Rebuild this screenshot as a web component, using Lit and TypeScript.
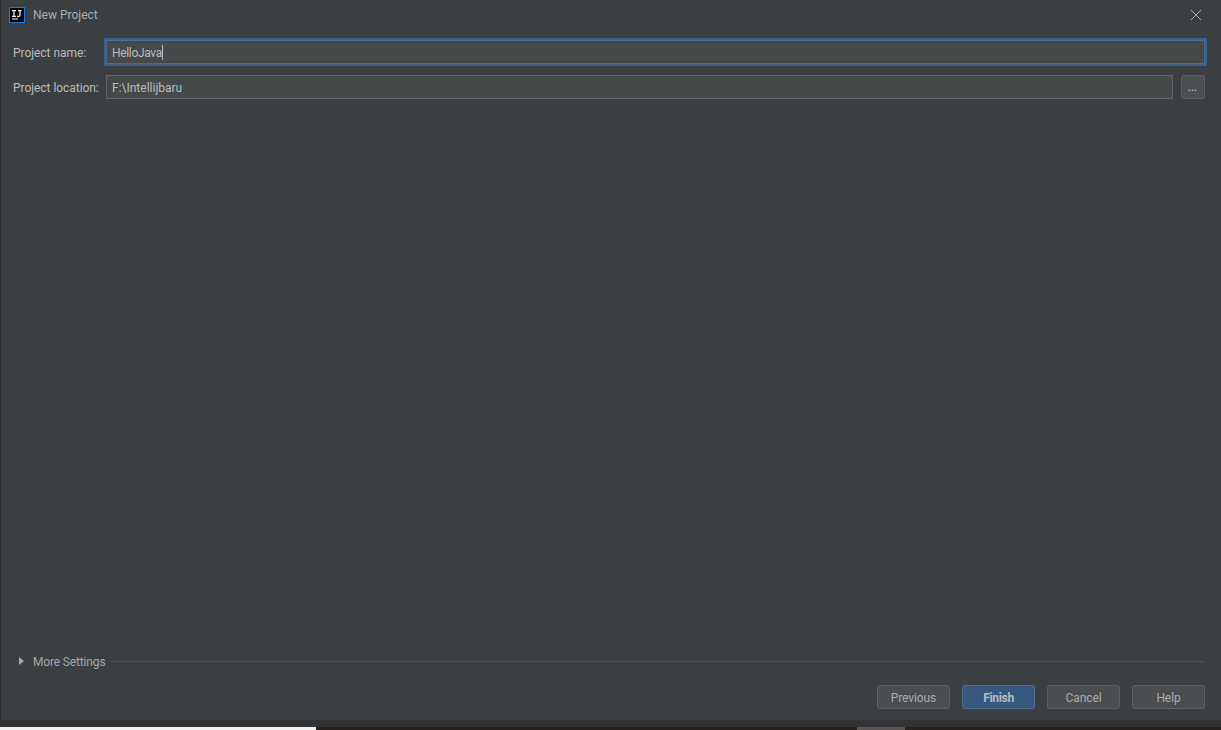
import { LitElement, html, css } from "lit";
import { customElement } from "lit/decorators.js";

@customElement("app-root")
export class AppRoot extends LitElement {
  static styles = css`
    :host {
      display: flex;
      flex-direction: column;
      width: 1221px;
      height: 730px;
      overflow: hidden;
      font-family: Roboto, "Liberation Sans", sans-serif;
      font-size: 12px;
      color: #bbbbbb;
      background: #313335;
    }
    .dialog {
      height: 720px;
      box-sizing: border-box;
      flex: none;
      display: flex;
      flex-direction: column;
      background: #3c3f41;
      border-left: 1px solid #323232;
      padding: 0 16px 11px 12px;
    }
    .title {
      height: 30px;
      flex: none;
      display: flex;
      align-items: center;
      margin-left: -4px;
      gap: 8px;
    }
    .logo {
      width: 16px;
      height: 16px;
      box-sizing: border-box;
      background: #000;
      border: 1px solid #0f7fe8;
      flex: none;
    }
    .logo svg { display: block; }
    .title-text { flex: 1; color: #a9adb0; }
    .close { margin-right: 3px; display: block; }
    .row {
      display: flex;
      align-items: center;
      flex: none;
    }
    .row.name { height: 24px; margin-top: 10px; }
    .row.location { height: 24px; margin-top: 11px; }
    .label { width: 93px; flex: none; padding-top: 2px; letter-spacing: -0.05px; }
    .field {
      box-sizing: border-box;
      height: 24px;
      background: #45494a;
      border: 1px solid #646464;
      padding: 2px 5px 0;
      display: flex;
      align-items: center;
      flex: 1;
      min-width: 0;
    }
    .field.focus {
      border-color: #466d94;
      outline: 2px solid #3d6185;
      letter-spacing: -0.33px;
    }
    .caret {
      width: 1px;
      height: 15px;
      margin-top: -2px;
      background: #bbbbbb;
    }
    .browse {
      box-sizing: border-box;
      width: 24px;
      height: 24px;
      margin-left: 8px;
      flex: none;
      background: #4c5052;
      border: 1px solid #5e6060;
      border-radius: 3px;
      display: flex;
      align-items: flex-end;
      justify-content: center;
      padding: 0 1px 5px 0;
      font-size: 12px;
      line-height: 11px;
      color: #d0d0d0;
    }
    .spacer { flex: 1; }
    .more {
      flex: none;
      display: flex;
      align-items: center;
      height: 16px;
      gap: 6px;
      color: #a3a8ab;
      letter-spacing: -0.15px;
    }
    .tri {
      width: 0;
      height: 0;
      border-left: 5px solid #a6a9ab;
      border-top: 4px solid transparent;
      border-bottom: 4px solid transparent;
      margin-left: 6px;
      margin-right: 3px;
      margin-bottom: 2px;
    }
    .rule { flex: 1; height: 1px; margin-bottom: 2px; background: #515151; }
    .actions {
      flex: none;
      display: flex;
      justify-content: flex-end;
      gap: 12px;
      margin-top: 15px;
    }
    .btn {
      box-sizing: border-box;
      width: 73px;
      height: 24px;
      padding-top: 2px;
      border: 1px solid #5e6060;
      border-radius: 3px;
      background: #4a4e50;
      display: flex;
      align-items: center;
      justify-content: center;
      color: #a9acae;
      letter-spacing: -0.1px;
    }
    .btn.primary {
      background: #365880;
      border-color: #4c708c;
      color: #bbbbbb;
      font-weight: 700;
      letter-spacing: -0.3px;
    }
    .shade { height: 7px; flex: none; background: #313335; }
    .strip { flex: 1; display: flex; background: #2b2118; }
    .strip .white { width: 316px; background: #f2f2f2; }
    .strip .dark { width: 541px; }
    .strip .gray { width: 48px; background: #5b5450; }
  `;

  render() {
    return html`
      <div class="dialog">
        <div class="title">
          <div class="logo">
            <svg width="14" height="14" viewBox="0 0 14 14">
              <path d="M2 2.6h4M4 2.6v5.8M2 8.4h4M7.2 7.8c.5.7 1.2.8 1.9.6.7-.2.9-.7.9-1.4V2.6M8 2.6h3.4" fill="none" stroke="#f0f0f0" stroke-width="1.3"/>
              <rect x="2" y="10.5" width="6" height="1" fill="#fff"/>
            </svg>
          </div>
          <div class="title-text">New Project</div>
          <svg class="close" width="12" height="12" viewBox="0 0 12 12">
            <path d="M1 1l10 10M11 1L1 11" stroke="#a9a9a9" stroke-width="1" fill="none"/>
          </svg>
        </div>
        <div class="row name">
          <div class="label">Project name:</div>
          <div class="field focus">HelloJava<span class="caret"></span></div>
        </div>
        <div class="row location">
          <div class="label">Project location:</div>
          <div class="field">F:\\Intellijbaru</div>
          <div class="browse">...</div>
        </div>
        <div class="spacer"></div>
        <div class="more">
          <span class="tri"></span>
          <span>More Settings</span>
          <span class="rule"></span>
        </div>
        <div class="actions">
          <div class="btn">Previous</div>
          <div class="btn primary">Finish</div>
          <div class="btn">Cancel</div>
          <div class="btn">Help</div>
        </div>
      </div>
      <div class="shade"></div>
      <div class="strip">
        <div class="white"></div>
        <div class="dark"></div>
        <div class="gray"></div>
      </div>
    `;
  }
}
